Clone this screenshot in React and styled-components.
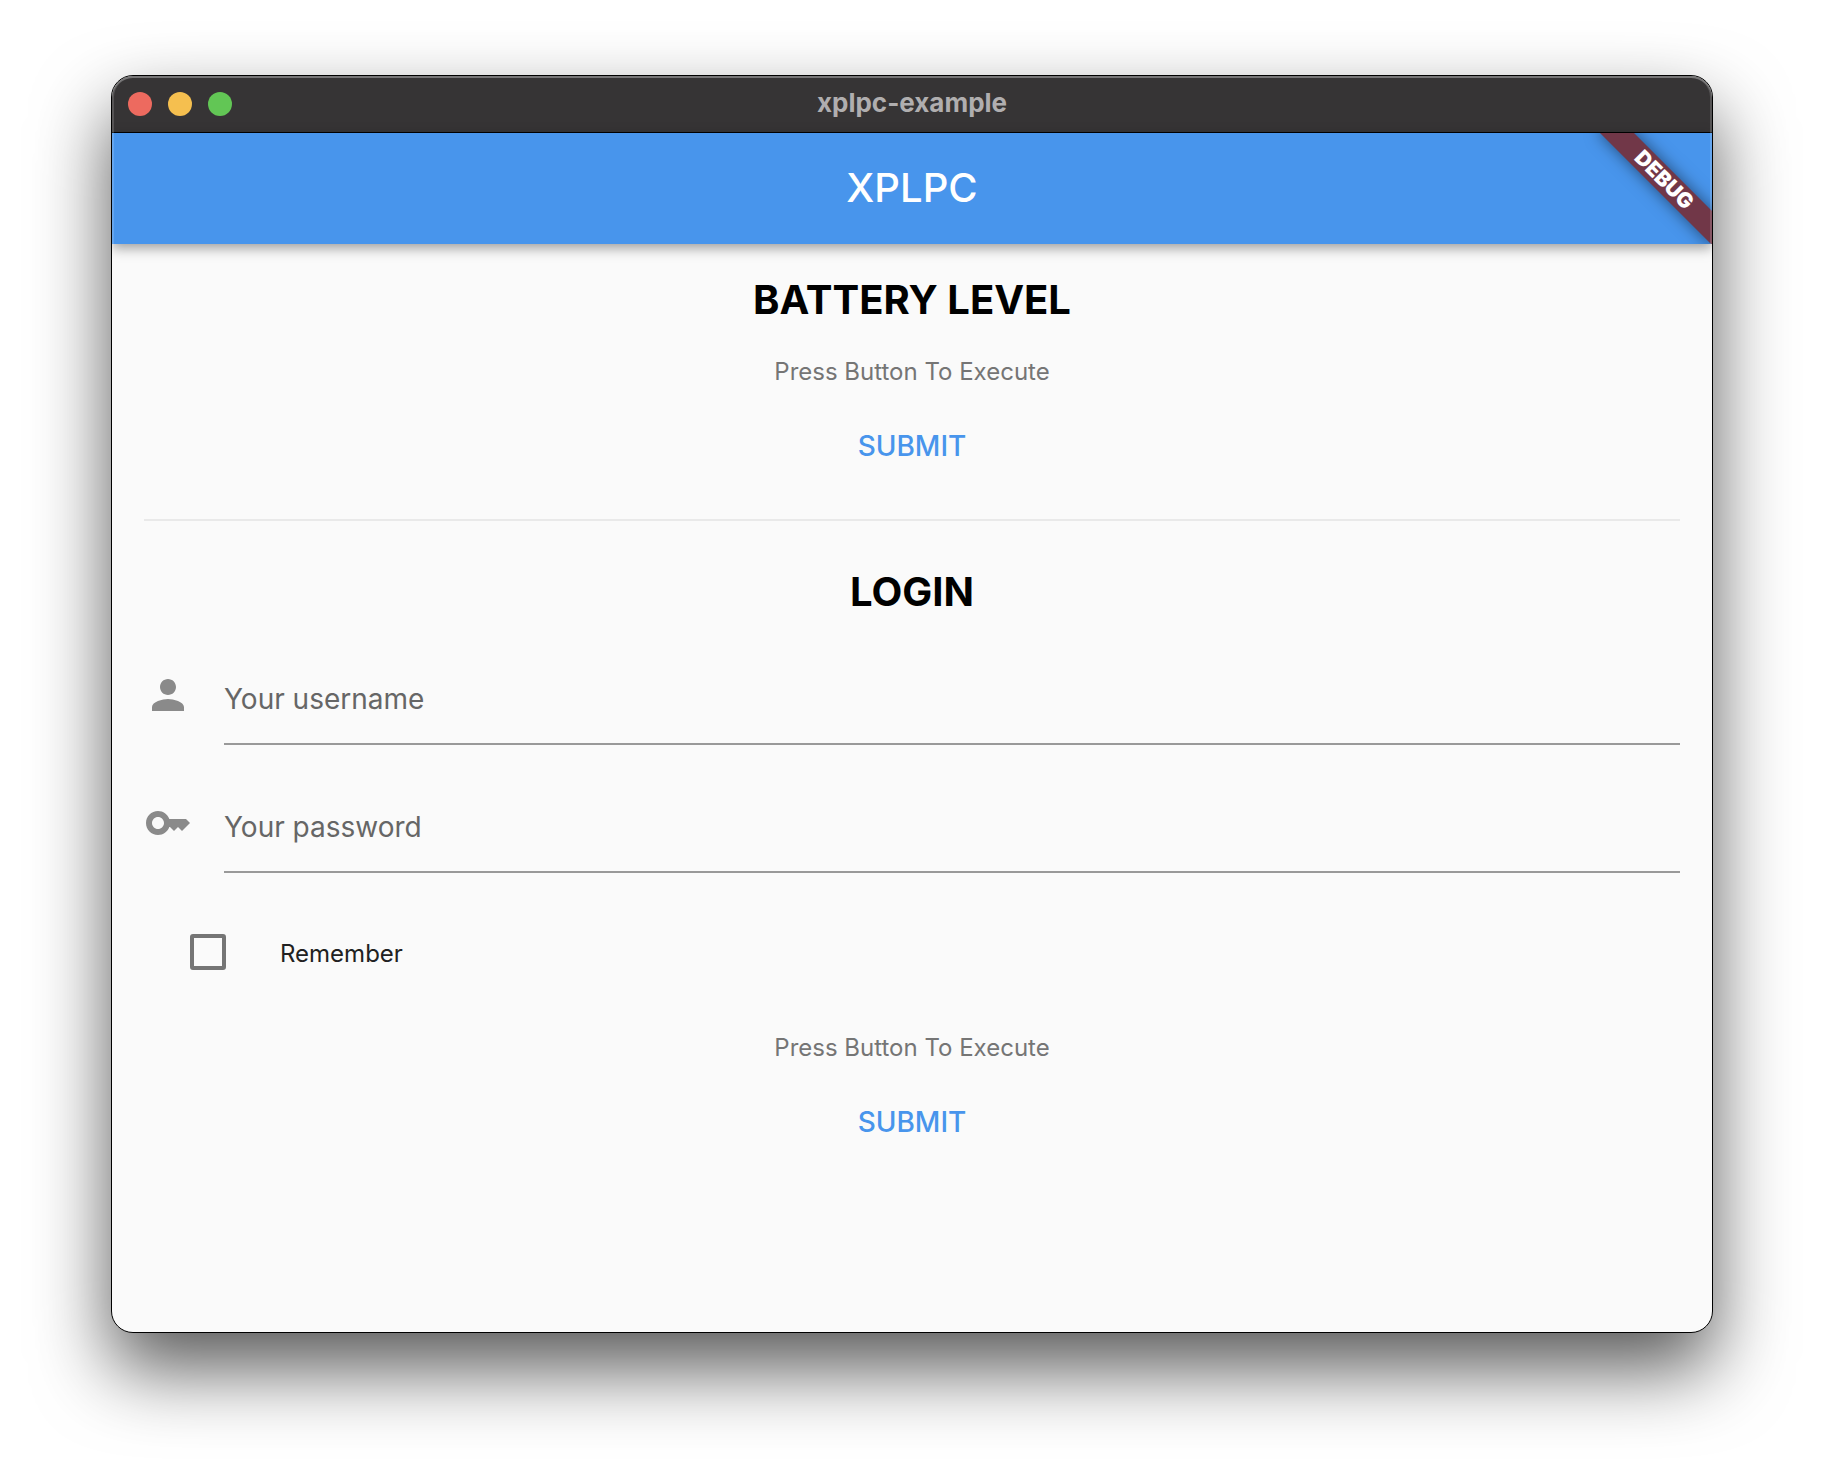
import React from "react";
import styled, { createGlobalStyle } from "styled-components";

const GlobalStyle = createGlobalStyle`
  *, *::before, *::after { box-sizing: border-box; }
  body {
    margin: 0;
    background: #ffffff;
    font-family: Inter, "Liberation Sans", sans-serif;
  }
  button, input { font-family: inherit; }
`;

const Desktop = styled.div`
  display: flex;
  min-height: 100vh;
  padding: 75px 111px 147px;
  overflow: hidden;
`;

const Window = styled.main`
  position: relative;
  flex: 1;
  display: flex;
  flex-direction: column;
  border: 1px solid #000000;
  border-radius: 22px;
  background: #fafafa;
  box-shadow: 0 36px 76px rgba(0, 0, 0, 0.65);
  overflow: hidden;

  &::after {
    content: "";
    position: absolute;
    inset: 0;
    border-radius: 21px;
    box-shadow: inset 0 0 0 2px rgba(255, 255, 255, 0.16),
      inset 0 2px 0 rgba(255, 255, 255, 0.2);
    pointer-events: none;
  }
`;

const TitleBar = styled.header`
  display: grid;
  grid-template-columns: 1fr auto 1fr;
  align-items: center;
  height: 57px;
  padding: 0 16px;
  background: #363435;
  border-bottom: 1px solid #000000;
`;

const WindowControls = styled.div`
  display: flex;
  gap: 16px;
`;

const WindowControl = styled.button`
  width: 24px;
  height: 24px;
  padding: 0;
  border: 0;
  border-radius: 50%;
  background: ${({ $color }) => $color};
`;

const WindowTitle = styled.div`
  padding-bottom: 2px;
  font-size: 26px;
  line-height: 32px;
  font-weight: 700;
  color: #b0aeaf;
`;

const AppBar = styled.div`
  display: flex;
  align-items: center;
  justify-content: center;
  position: relative;
  height: 111px;
  background: #4895ec;
  box-shadow: 0 4px 12px rgba(0, 0, 0, 0.38);
`;

const AppTitle = styled.h1`
  margin: 0;
  padding-bottom: 2px;
  font-size: 40px;
  line-height: 48px;
  font-weight: 500;
  color: #ffffff;
`;

const RibbonClip = styled.div`
  position: absolute;
  inset: 0;
  overflow: hidden;
  pointer-events: none;
`;

const Ribbon = styled.div`
  position: absolute;
  top: 35px;
  right: -32px;
  width: 160px;
  height: 24px;
  transform: rotate(45deg);
  background: #713748;
  box-shadow: 0 0 16px rgba(0, 0, 0, 0.5);
  color: #ffffff;
  font-size: 21px;
  line-height: 24px;
  font-weight: 900;
  text-align: center;
`;

const Content = styled.div`
  flex: 1;
  display: flex;
  flex-direction: column;
  padding: 32px;
`;

const Section = styled.section`
  display: flex;
  flex-direction: column;
`;

const LoginForm = styled.form`
  display: flex;
  flex-direction: column;
`;

const Heading = styled.h2`
  margin: 0 0 32px;
  font-size: 40px;
  line-height: 48px;
  font-weight: 700;
  text-align: center;
  color: #000000;
`;

const Status = styled.p`
  margin: 0 0 20px;
  font-size: 24px;
  line-height: 32px;
  text-align: center;
  color: #757575;
`;

const SubmitButton = styled.button`
  align-self: center;
  height: 76px;
  padding: 0 16px;
  border: 0;
  background: transparent;
  font-size: 28px;
  line-height: 32px;
  font-weight: 500;
  color: #4895ec;
`;

const Divider = styled.hr`
  width: 100%;
  height: 2px;
  margin: 35px 0 47px;
  border: 0;
  background: #e9e9e9;
`;

const Field = styled.div`
  display: flex;
  align-items: flex-start;
  gap: 32px;
  margin-bottom: 31px;
`;

const FieldIcon = styled.svg`
  flex: none;
  width: 48px;
  height: 48px;
  margin-top: 23px;
  fill: #8a8a8a;
`;

const FieldInput = styled.input`
  flex: 1;
  min-width: 0;
  height: 97px;
  padding: 6px 0 0;
  border: 0;
  border-bottom: 2px solid #999999;
  border-radius: 0;
  outline: 0;
  background: transparent;
  font-size: 28px;
  line-height: 34px;
  color: #212121;

  &::placeholder {
    color: #666666;
    opacity: 1;
  }
`;

const RememberRow = styled.label`
  display: flex;
  align-items: center;
  align-self: flex-start;
  gap: 54px;
  height: 72px;
  margin: 12px 0 44px;
  padding-left: 46px;
`;

const RememberText = styled.span`
  padding-top: 4px;
  font-size: 24px;
  line-height: 32px;
  color: #212121;
`;

const CheckBox = styled.input`
  appearance: none;
  width: 36px;
  height: 36px;
  margin: 0;
  border: 4px solid #757575;
  border-radius: 3px;

  &:checked {
    background: #4895ec;
  }
`;

const personPath =
  "M12 12c2.21 0 4-1.79 4-4s-1.79-4-4-4-4 1.79-4 4 1.79 4 4 4zm0 2c-2.67 0-8 1.34-8 4v2h16v-2c0-2.66-5.33-4-8-4z";
const keyPath =
  "M21 10h-8.35C11.83 7.67 9.61 6 7 6c-3.31 0-6 2.69-6 6s2.69 6 6 6c2.61 0 4.83-1.67 5.65-4H13l2 2 2-2 2 2 4-4.04L21 10zM7 15c-1.65 0-3-1.35-3-3s1.35-3 3-3 3 1.35 3 3-1.35 3-3 3z";

const controls = [
  { name: "Close", color: "#ed6a5f" },
  { name: "Minimize", color: "#f5bf4f" },
  { name: "Zoom", color: "#62c655" },
];

const fields = [
  { id: "username", type: "text", hint: "Your username", icon: personPath },
  { id: "password", type: "password", hint: "Your password", icon: keyPath },
];

export default function App() {
  return (
    <>
      <GlobalStyle />
      <Desktop>
        <Window>
          <TitleBar>
            <WindowControls>
              {controls.map((c) => (
                <WindowControl key={c.name} type="button" aria-label={c.name} $color={c.color} />
              ))}
            </WindowControls>
            <WindowTitle>xplpc-example</WindowTitle>
          </TitleBar>
          <AppBar>
            <AppTitle>XPLPC</AppTitle>
            <RibbonClip>
              <Ribbon>DEBUG</Ribbon>
            </RibbonClip>
          </AppBar>
          <Content>
            <Section>
              <Heading>BATTERY LEVEL</Heading>
              <Status>Press Button To Execute</Status>
              <SubmitButton type="button">SUBMIT</SubmitButton>
            </Section>
            <Divider />
            <LoginForm onSubmit={(e) => e.preventDefault()}>
              <Heading>LOGIN</Heading>
              {fields.map((f) => (
                <Field key={f.id}>
                  <FieldIcon viewBox="0 0 24 24" aria-hidden="true">
                    <path d={f.icon} />
                  </FieldIcon>
                  <FieldInput id={f.id} type={f.type} placeholder={f.hint} aria-label={f.hint} />
                </Field>
              ))}
              <RememberRow>
                <CheckBox type="checkbox" />
                <RememberText>Remember</RememberText>
              </RememberRow>
              <Status>Press Button To Execute</Status>
              <SubmitButton type="submit">SUBMIT</SubmitButton>
            </LoginForm>
          </Content>
        </Window>
      </Desktop>
    </>
  );
}
